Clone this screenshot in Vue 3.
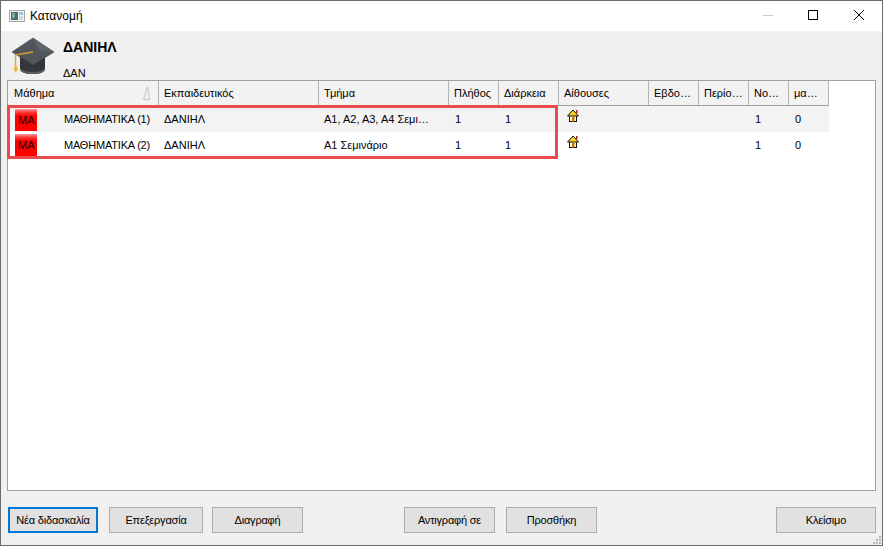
<template>
  <div class="window">
    <div class="titlebar">
      <svg class="app-icon" width="16" height="16" viewBox="0 0 16 16">
        <rect x="0.5" y="2.5" width="15" height="11" fill="#f2f2f2" stroke="#a8a8a8" />
        <rect x="2" y="4" width="7" height="8" fill="#3d6f73" />
        <rect x="3" y="5" width="3" height="5" fill="#7fa8a8" />
        <rect x="10" y="4" width="4" height="3" fill="#9fc4d8" />
        <rect x="10" y="8" width="4" height="4" fill="#d8d8d8" />
      </svg>
      <span class="title">Κατανομή</span>
      <div class="controls">
        <svg width="46" height="30" viewBox="0 0 46 30"><line x1="18" y1="14.5" x2="28" y2="14.5" stroke="#c8c8c8" /></svg>
        <svg width="46" height="30" viewBox="0 0 46 30"><rect x="17.5" y="9.5" width="9" height="9" fill="none" stroke="#000" /></svg>
        <svg width="46" height="30" viewBox="0 0 46 30"><path d="M17 9 L27 19 M27 9 L17 19" stroke="#000" fill="none" /></svg>
      </div>
    </div>

    <div class="body">
      <div class="teacher">
        <svg class="cap" width="44" height="38" viewBox="0 0 44 38">
          <path d="M9 18 V32 Q10 37 22 37 Q33 37 34 32 V18 Z" fill="#33363a" />
          <path d="M9 31 Q12 35 22 35 Q31 35 34 31 V33 Q32 37 22 37 Q11 37 9 33 Z" fill="#5a5d61" />
          <path d="M22 1 L43 15 L22 28 L1 15 Z" fill="#50565b" stroke="#3c4044" stroke-width="0.6" />
          <path d="M22 1 L43 15 L28 13 Z" fill="#5f666b" />
          <path d="M4 18 L22 15" stroke="#d9a02c" stroke-width="1.5" fill="none" />
          <path d="M4.5 18 V29" stroke="#e0a62e" stroke-width="1.4" fill="none" />
          <path d="M4.5 27 L7 32 L4.5 36 L2.5 32 Z" fill="#f0b63a" />
        </svg>
        <div class="teacher-text">
          <div class="teacher-name">ΔΑΝΙΗΛ</div>
          <div class="teacher-code">ΔΑΝ</div>
        </div>
      </div>

      <div class="table-frame">
        <div class="grid head">
          <div v-for="(h, i) in headers" :key="h" class="th">
            {{ h }}
            <svg v-if="i === 0" class="sort" width="7" height="14" viewBox="0 0 7 14">
              <path d="M4.5 0.5 L0.5 13.5 H6.5 Z" fill="none" stroke="#c4c4c4" />
            </svg>
          </div>
        </div>
        <div v-for="(row, r) in rows" :key="r" class="grid row" :class="{ odd: r === 0 }">
          <div class="td subject">
            <span class="badge">ΜΑ</span>
            <span class="subject-name">{{ row.subject }}</span>
          </div>
          <div class="td">{{ row.teacher }}</div>
          <div class="td">{{ row.group }}</div>
          <div class="td">1</div>
          <div class="td">1</div>
          <div class="td room">
            <svg width="12" height="13" viewBox="0 0 12 13">
              <rect x="2.5" y="6" width="7" height="6.5" fill="#fff8d0" stroke="#111" />
              <path d="M0.5 7 L6 1 L11.5 7 Z" fill="#ffd21e" stroke="#111" />
              <rect x="5" y="8" width="2.5" height="4.5" fill="#c97a00" />
              <rect x="9" y="1" width="1.5" height="3" fill="#a82020" />
            </svg>
          </div>
          <div class="td"></div>
          <div class="td"></div>
          <div class="td">1</div>
          <div class="td">0</div>
        </div>
        <div class="highlight"></div>
      </div>

      <div class="footer">
        <button class="btn focused">Νέα διδασκαλία</button>
        <button class="btn edit">Επεξεργασία</button>
        <button class="btn delete">Διαγραφή</button>
        <button class="btn">Αντιγραφή σε</button>
        <button class="btn">Προσθήκη</button>
        <button class="btn close">Κλείσιμο</button>
      </div>
    </div>

    <svg class="grip" width="10" height="10" viewBox="0 0 10 10" fill="#b4b4b4">
      <rect x="7" y="1" width="2" height="2" />
      <rect x="4" y="4" width="2" height="2" />
      <rect x="7" y="4" width="2" height="2" />
      <rect x="1" y="7" width="2" height="2" />
      <rect x="4" y="7" width="2" height="2" />
      <rect x="7" y="7" width="2" height="2" />
    </svg>
  </div>
</template>

<script setup>
const headers = ["Μάθημα", "Εκπαιδευτικός", "Τμήμα", "Πλήθος", "Διάρκεια", "Αίθουσες", "Εβδο…", "Περίο…", "Νο…", "μα…"];

const rows = [
  { subject: "ΜΑΘΗΜΑΤΙΚΑ (1)", teacher: "ΔΑΝΙΗΛ", group: "Α1, Α2, Α3, Α4 Σεμι…" },
  { subject: "ΜΑΘΗΜΑΤΙΚΑ (2)", teacher: "ΔΑΝΙΗΛ", group: "Α1 Σεμινάριο" }
];
</script>

<style>
html, body {
  margin: 0;
  height: 100%;
  overflow: hidden;
}
</style>

<style scoped>
.window {
  position: relative;
  box-sizing: border-box;
  width: 883px;
  height: 546px;
  display: flex;
  flex-direction: column;
  border: 1px solid #6b6b6b;
  background: #f0f0f0;
  font-family: "Liberation Sans", Arial, sans-serif;
  font-size: 11px;
  color: #000;
}

.titlebar {
  height: 30px;
  flex: none;
  display: flex;
  align-items: center;
  background: #fff;
  padding-left: 8px;
}

.title {
  margin-left: 5px;
  font-size: 12px;
}

.controls {
  margin-left: auto;
  display: flex;
  height: 30px;
  margin-right: -1px;
}

.controls svg {
  display: block;
}

.body {
  flex: 1;
  display: flex;
  flex-direction: column;
  min-height: 0;
  padding: 0 6px;
}

.teacher {
  height: 49px;
  flex: none;
  display: flex;
  padding-left: 4px;
}

.cap {
  margin-top: 6px;
}

.teacher-text {
  margin-left: 8px;
  padding-top: 8px;
  display: flex;
  flex-direction: column;
  justify-content: space-between;
  padding-bottom: 1px;
}

.teacher-name {
  font-weight: 700;
  font-size: 14px;
}

.table-frame {
  position: relative;
  flex: 1;
  background: #fff;
  border: 1px solid #a0a0a0;
}

.grid {
  display: grid;
  grid-template-columns: 151px 160px 130px 50px 60px 90px 50px 50px 40px 40px;
  width: 821px;
}

.head {
  height: 25px;
  background: #f2f2f2;
  border-bottom: 1px solid #a0a0a0;
  box-sizing: border-box;
}

.th {
  position: relative;
  display: flex;
  align-items: center;
  padding-left: 5px;
  border-right: 1px solid #b4b4b4;
  overflow: hidden;
  white-space: nowrap;
}

.th:first-child {
  padding-left: 6px;
}

.sort {
  position: absolute;
  top: 5px;
  right: 8px;
}

.row {
  height: 26px;
}

.row.odd {
  background: #f3f3f3;
}

.td {
  display: flex;
  align-items: center;
  padding-left: 5px;
  white-space: nowrap;
  overflow: hidden;
}

.td:nth-child(4),
.td:nth-child(5),
.td:nth-child(9),
.td:nth-child(10) {
  padding-left: 6px;
}

.subject {
  padding-left: 7px;
}

.badge {
  width: 22px;
  height: 22px;
  flex: none;
  display: flex;
  align-items: center;
  padding-left: 3px;
  box-sizing: border-box;
  font-size: 11px;
  color: #200;
  background: linear-gradient(#f2a0a0 0, #fb4040 3px, #ff0000 7px, #ff0000 100%);
}

.row.odd .badge {
  margin-top: 2px;
}

.subject-name {
  margin-left: 27px;
  letter-spacing: -0.2px;
}

.room {
  align-items: flex-start;
  padding-top: 3px;
  padding-left: 8px;
}

.highlight {
  position: absolute;
  left: -1px;
  top: 24px;
  width: 551px;
  height: 54px;
  box-sizing: border-box;
  border: 3px solid #e84b4b;
  pointer-events: none;
}

.footer {
  height: 54px;
  flex: none;
  display: flex;
  align-items: center;
  padding-left: 1px;
  padding-top: 4px;
  box-sizing: border-box;
}

.btn {
  box-sizing: border-box;
  width: 91px;
  height: 26px;
  margin-right: 11px;
  padding: 0;
  background: #e1e1e1;
  border: 1px solid #adadad;
  font: inherit;
  letter-spacing: -0.2px;
  color: #000;
}

.btn.focused {
  border: 2px solid #0078d7;
  width: 90px;
}

.btn.edit {
  width: 94px;
  margin-right: 9px;
}

.btn.delete {
  margin-right: 101px;
}

.btn.close {
  width: 100px;
  margin-left: auto;
  margin-right: 0;
}

.grip {
  position: absolute;
  right: 0;
  bottom: 0;
}
</style>
